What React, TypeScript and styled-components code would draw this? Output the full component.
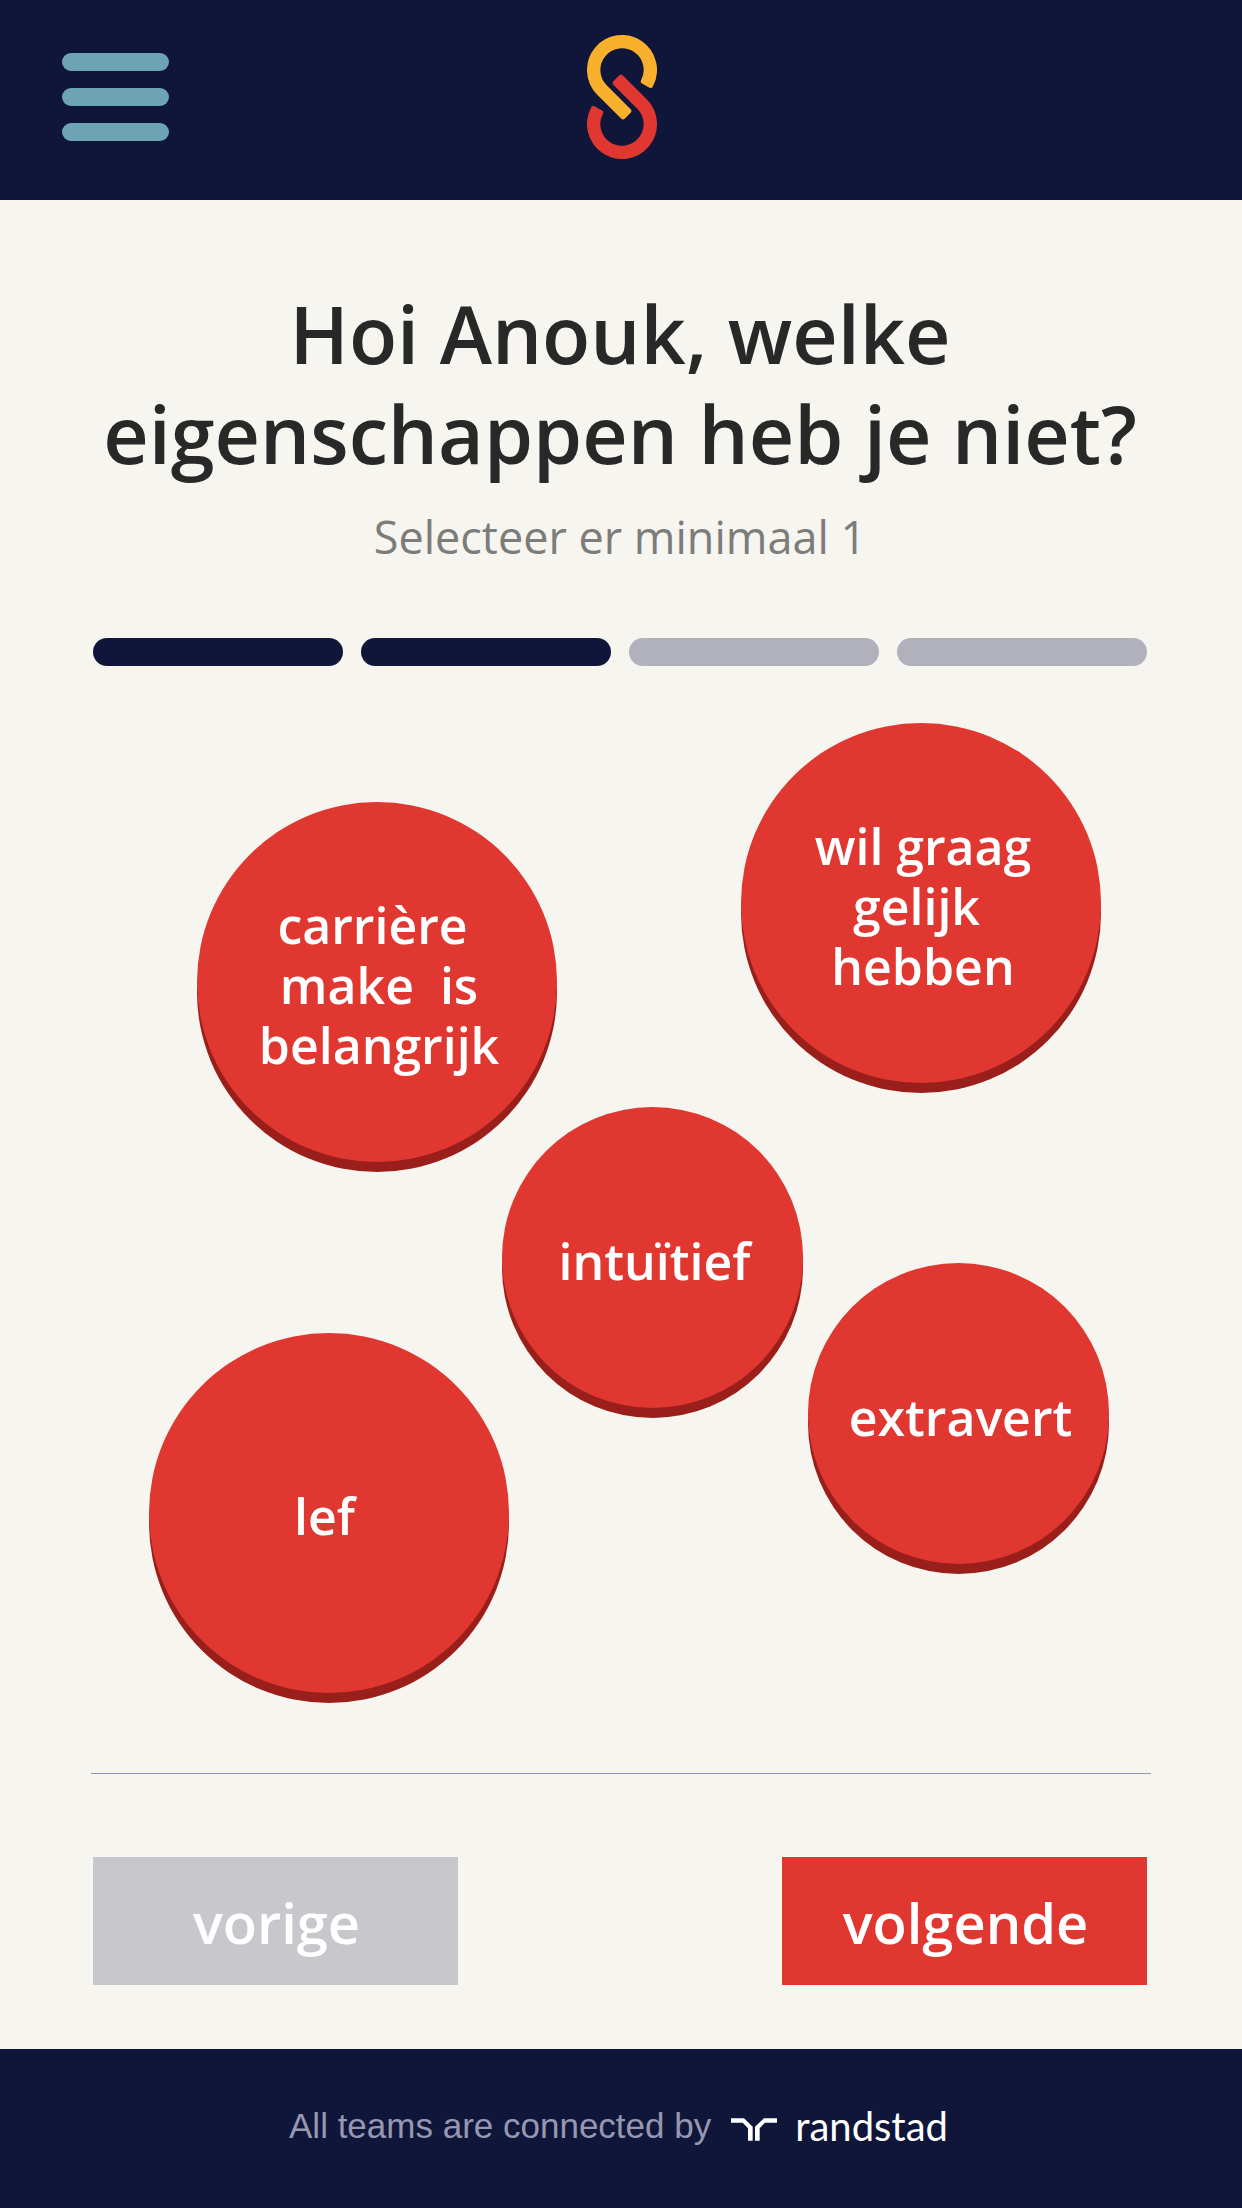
import React, { useState } from "react";
import styled, { createGlobalStyle } from "styled-components";

const color = {
  navy: "#10163a",
  cream: "#f6f5f0",
  red: "#e13731",
  darkRed: "#9a1f1b",
  yellow: "#f9b02c",
  teal: "#6ca4b3",
  step: "#b0b1bb",
  muted: "#c8c7cc",
  lavender: "#9697b0",
};

const GlobalStyle = createGlobalStyle`
  *, *::before, *::after { box-sizing: border-box; }
  body {
    margin: 0;
    background: ${color.cream};
    color: #282828;
    font-family: "Open Sans", "Noto Sans", sans-serif;
  }
  button { font: inherit; border: 0; padding: 0; cursor: pointer; }
`;

const Page = styled.div`
  display: flex;
  flex-direction: column;
  min-height: 100vh;
`;

const Header = styled.header`
  display: grid;
  grid-template-columns: 1fr auto 1fr;
  align-items: center;
  height: 200px;
  padding: 0 60px 6px 62px;
  background: ${color.navy};
`;

const MenuButton = styled.button`
  display: flex;
  flex-direction: column;
  gap: 17px;
  width: 107px;
  background: none;
`;

const MenuBar = styled.span`
  width: 100%;
  height: 18px;
  border-radius: 9px;
  background: ${color.teal};
`;

const Logo = styled.svg`
  display: block;
  width: 70px;
  height: 124px;
`;

const Main = styled.main`
  flex: 1;
  padding: 84px 95px 64px 93px;
`;

const Title = styled.h1`
  margin: 0 -20px;
  font-size: 79px;
  font-weight: 600;
  line-height: 100px;
  text-align: center;
`;

const Hint = styled.p`
  margin: 23px 0 71px;
  color: #7c7c7a;
  font-size: 45px;
  line-height: 60px;
  text-align: center;
`;

const Steps = styled.ol`
  display: flex;
  gap: 18px;
  margin: 0;
  padding: 0;
  list-style: none;
`;

const Step = styled.li<{ $done: boolean }>`
  flex: 1;
  height: 28px;
  border-radius: 14px;
  background: ${(p) => (p.$done ? color.navy : color.step)};
`;

const BubbleCanvas = styled.section`
  position: relative;
  height: 1107px;
`;

const Bubble = styled.button<{ $x: number; $y: number; $size: number }>`
  position: absolute;
  left: calc(50% + ${(p) => p.$x}px);
  top: ${(p) => p.$y}px;
  width: ${(p) => p.$size}px;
  height: ${(p) => p.$size}px;
  padding: 6px 0 0 4px;
  border-radius: 50%;
  background: ${color.red};
  box-shadow: 0 10px 0 ${color.darkRed};
  color: #fff;
  font-size: 50px;
  font-weight: 600;
  line-height: 60px;
  text-align: center;
  white-space: pre;
  &[aria-pressed="true"] {
    background: ${color.navy};
  }
`;

const Divider = styled.hr`
  height: 1px;
  margin: 0 -4px 83px -2px;
  border: 0;
  background: ${color.lavender};
`;

const Actions = styled.div`
  display: flex;
  justify-content: space-between;
`;

const ActionButton = styled.button<{ $primary?: boolean }>`
  width: 365px;
  height: 128px;
  padding: 2px 0 0 2px;
  background: ${(p) => (p.$primary ? color.red : color.muted)};
  color: #fff;
  font-size: 56px;
  font-weight: 600;
`;

const Footer = styled.footer`
  display: flex;
  align-items: center;
  justify-content: center;
  gap: 20px;
  height: 159px;
  padding: 0 5px 5px 0;
  background: ${color.navy};
  color: ${color.lavender};
  font-family: "Liberation Sans", Arial, sans-serif;
  font-size: 35px;
`;

const Brand = styled.a`
  display: flex;
  align-items: baseline;
  gap: 18px;
  color: #fff;
  font-family: Lato, sans-serif;
  font-size: 40px;
  text-decoration: none;
`;

const BrandMark = styled.svg`
  width: 46px;
  height: 23px;
`;

const bubbles = [
  { label: "carrière \nmake  is\nbelangrijk", x: -423, y: 136, size: 360 },
  { label: "wil graag\ngelijk \nhebben", x: 121, y: 57, size: 360 },
  { label: "intuïtief", x: -118, y: 441, size: 301 },
  { label: "extravert", x: 188, y: 597, size: 301 },
  { label: "lef ", x: -471, y: 667, size: 360 },
];

const hook =
  "M249.3 184.4A72 72 0 1 0 135.1 200.9L207 273L189 291L116.7 219.3A98 98 0 1 1 272.1 196.8Z";

const TOTAL_STEPS = 4;

export default function App() {
  const [selected, setSelected] = useState<string[]>([]);
  const step = 2;

  const toggle = (label: string) =>
    setSelected((current) =>
      current.includes(label)
        ? current.filter((item) => item !== label)
        : [...current, label]
    );

  return (
    <Page>
      <GlobalStyle />
      <Header>
        <MenuButton type="button" aria-label="Menu">
          <MenuBar />
          <MenuBar />
          <MenuBar />
        </MenuButton>
        <Logo viewBox="81 45 210 372" aria-hidden="true" strokeWidth="14" strokeLinejoin="round">
          <path d={hook} fill={color.yellow} stroke={color.yellow} />
          <path d={hook} fill={color.red} stroke={color.red} transform="rotate(180 186 231)" />
        </Logo>
      </Header>

      <Main>
        <Title>
          Hoi Anouk, welke
          <br />
          eigenschappen heb je niet?
        </Title>
        <Hint>Selecteer er minimaal 1</Hint>
        <Steps>
          {Array.from({ length: TOTAL_STEPS }, (_, i) => (
            <Step key={i} $done={i < step} />
          ))}
        </Steps>

        <BubbleCanvas>
          {bubbles.map((b) => (
            <Bubble
              key={b.label}
              type="button"
              $x={b.x}
              $y={b.y}
              $size={b.size}
              aria-pressed={selected.includes(b.label)}
              onClick={() => toggle(b.label)}
            >
              {b.label}
            </Bubble>
          ))}
        </BubbleCanvas>

        <Divider />
        <Actions>
          <ActionButton type="button">vorige</ActionButton>
          <ActionButton type="button" $primary>
            volgende
          </ActionButton>
        </Actions>
      </Main>

      <Footer>
        <span>All teams are connected by</span>
        <Brand href="#">
          <BrandMark viewBox="66 115 138 68" aria-hidden="true" fill="#fff">
            <path d="M66 115H105L131 141V183H117V145L101 129H66Z" />
            <path d="M204 115H165L138 141V183H152V145L168 129H204Z" />
          </BrandMark>
          randstad
        </Brand>
      </Footer>
    </Page>
  );
}
